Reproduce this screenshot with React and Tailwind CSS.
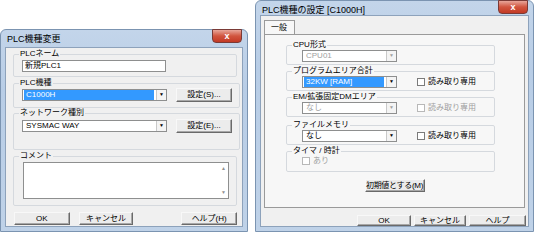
import React from "react";

const Btn = ({ children, className = "" }) => (
    <div className={`flex items-center justify-center whitespace-nowrap bg-[#ececec] border border-t-[#f8f8f8] border-l-[#f8f8f8] border-r-[#6a6a6a] border-b-[#6a6a6a] shadow-[inset_-1px_-1px_0_#a8a8a8] text-[8px] leading-none text-black ${className}`}>
        {children}
    </div>
);

const Combo = ({ value, selected, disabled, className = "" }) => (
    <div className={`flex items-stretch h-[12px] bg-white border border-[#8e8f8f] ${className}`}>
        <div className="flex-1 flex items-center pl-[1px] pr-[2px]">
            <span className={`px-[2px] h-full flex items-center text-[8px] leading-none flex-1 ${selected ? "bg-[#3399ff] text-white" : disabled ? "text-[#a0a0a0]" : "text-black"}`}>
                {value}
            </span>
        </div>
        <div className={`w-[10px] flex items-center justify-center border-l border-[#c9c9c9] bg-[#f4f4f4] text-[5px] ${disabled ? "text-[#a0a0a0]" : "text-black"}`}>
            ▼
        </div>
    </div>
);

const Group = ({ label, className = "", children }) => (
    <fieldset className={`border border-[#d5d9de] rounded-[2px] px-[7px] ${className}`}>
        <legend className="text-[8px] leading-[10px] px-[1px] -ml-[2px] text-black whitespace-nowrap">{label}</legend>
        {children}
    </fieldset>
);

const Check = ({ label, disabled }) => (
    <div className={`flex items-center gap-[3px] text-[8px] leading-none whitespace-nowrap ${disabled ? "text-[#a0a0a0]" : "text-black"}`}>
        <div className={`w-[8px] h-[8px] border ${disabled ? "border-[#b8b8b8]" : "border-[#7b7b7b]"} bg-white`} />
        {label}
    </div>
);

const Window = ({ title, className = "", children }) => (
    <div className={`flex flex-col rounded-t-[6px] border border-[#7b94b1] bg-[linear-gradient(to_bottom,#c3d5ea,#b8cde6_30%,#bfd2e8)] px-[4px] pb-[4px] ${className}`}>
        <div className="h-[17px] flex items-start justify-between">
            <div className="pl-[2px] pt-[4px] text-[9px] leading-[10px] text-black">{title}</div>
            <div className="mt-[-1px] mr-[1px] w-[30px] h-[14px] rounded-b-[4px] border border-[#7a3a36] bg-[linear-gradient(to_bottom,#e8a69a,#d1553f_50%,#c33a25)] flex items-center justify-center text-white text-[9px] font-bold leading-none">
                x
            </div>
        </div>
        <div className="flex-1 bg-[#f0f0f0] border border-[#8da2bb]">{children}</div>
    </div>
);

const App = () => {
    return (
        <div className="w-[535px] h-[236px] bg-white flex items-start gap-[7px] overflow-hidden font-['Liberation_Sans','Noto_Sans_CJK_JP',sans-serif]">
            <Window title="PLC機種変更" className="mt-[29px] w-[248px] h-[203px]">
                <div className="flex flex-col pl-[7px] pr-[5px] pt-[1px]">
                    <Group label="PLCネーム" className="h-[28px]">
                        <div className="mt-[1px] ml-[1px] w-[144px] h-[12px] bg-white border border-[#8e8f8f] flex items-center px-[2px] text-[8px] leading-none">
                            新規PLC1
                        </div>
                    </Group>
                    <Group label="PLC機種" className="h-[30px] mt-[1px]">
                        <div className="flex items-center gap-[9px]">
                            <Combo value="C1000H" selected className="ml-[1px] w-[145px]" />
                            <Btn className="w-[56px] h-[14px]">設定(S)...</Btn>
                        </div>
                    </Group>
                    <Group label="ネットワーク種別" className="h-[42px]">
                        <div className="flex items-center gap-[9px] mt-[1px]">
                            <Combo value="SYSMAC WAY" className="ml-[1px] w-[145px]" />
                            <Btn className="w-[56px] h-[14px]">設定(E)...</Btn>
                        </div>
                    </Group>
                    <Group label="コメント" className="h-[55px] mt-[1px]">
                        <div className="mt-[1px] ml-[2px] w-[206px] h-[37px] bg-white border border-[#8e8f8f] flex justify-end">
                            <div className="w-[9px] flex flex-col justify-between items-center text-[5px] text-[#909090] py-[2px] bg-white">
                                <span>▲</span>
                                <span>▼</span>
                            </div>
                        </div>
                    </Group>
                    <div className="flex items-center mt-[6px] pl-[1px]">
                        <Btn className="w-[56px] h-[13px]">OK</Btn>
                        <Btn className="w-[55px] h-[13px] ml-[9px]">キャンセル</Btn>
                        <Btn className="w-[56px] h-[13px] ml-[48px]">ヘルプ(H)</Btn>
                    </div>
                </div>
            </Window>

            <Window title="PLC機種の設定 [C1000H]" className="w-[279px] h-[232px]">
                <div className="flex flex-col pl-[2px] pr-[2px] pt-[4px]">
                    <div className="flex">
                        <div className="ml-[1px] w-[31px] h-[14px] flex items-center pl-[6px] text-[8px] leading-none bg-[#f7f7f7] border border-b-0 border-[#9a9a9a]">
                            一般
                        </div>
                    </div>
                    <div className="ml-[1px] mr-[1px] h-[174px] border border-[#9a9a9a] bg-[#f7f7f7] flex flex-col pl-[21px] pr-[29px] pt-[5px]">
                        <Group label="CPU形式" className="h-[25px]">
                            <Combo value="CPU01" disabled className="ml-[8px] w-[95px]" />
                        </Group>
                        <Group label="プログラムエリア合計" className="h-[25px] mt-[1px]">
                            <div className="flex items-center gap-[20px]">
                                <Combo value="32KW [RAM]" selected className="ml-[8px] w-[95px]" />
                                <Check label="読み取り専用" />
                            </div>
                        </Group>
                        <Group label="EM/拡張固定DMエリア" className="h-[25px] mt-[1px]">
                            <div className="flex items-center gap-[20px]">
                                <Combo value="なし" disabled className="ml-[8px] w-[95px]" />
                                <Check label="読み取り専用" disabled />
                            </div>
                        </Group>
                        <Group label="ファイルメモリ" className="h-[25px] mt-[3px]">
                            <div className="flex items-center gap-[20px]">
                                <Combo value="なし" className="ml-[8px] w-[95px]" />
                                <Check label="読み取り専用" />
                            </div>
                        </Group>
                        <Group label="タイマ / 時計" className="h-[26px] mt-[1px]">
                            <div className="ml-[8px] mt-[1px]">
                                <Check label="あり" disabled />
                            </div>
                        </Group>
                        <div className="flex justify-center mt-[7px]">
                            <Btn className="w-[60px] h-[13px] ml-[8px] text-[7px] tracking-[-0.3px]">初期値とする(M)</Btn>
                        </div>
                    </div>
                    <div className="flex justify-end mt-[7px] gap-[3px]">
                        <Btn className="w-[54px] h-[11px]">OK</Btn>
                        <Btn className="w-[52px] h-[11px]">キャンセル</Btn>
                        <Btn className="w-[57px] h-[11px]">ヘルプ</Btn>
                    </div>
                </div>
            </Window>
        </div>
    );
};

export default App;
